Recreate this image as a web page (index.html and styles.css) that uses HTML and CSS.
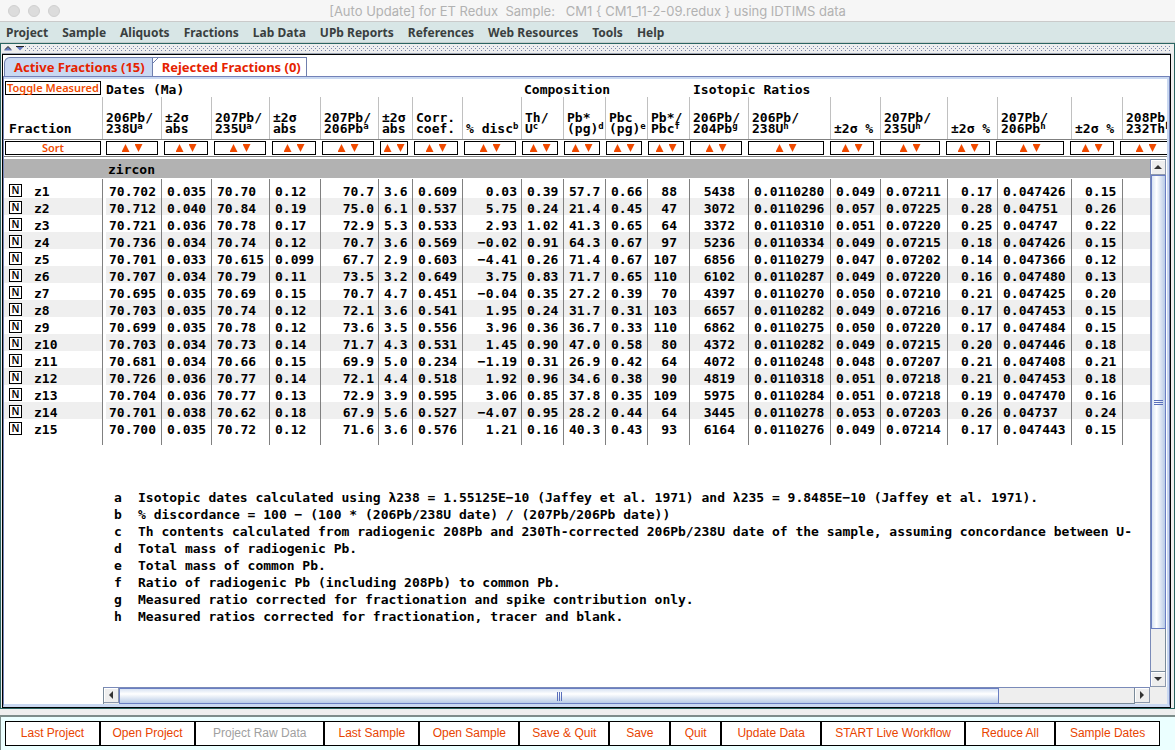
FILE: index.html
```
<!DOCTYPE html>
<html lang="en">
<head>
<meta charset="utf-8">
<title>ET Redux</title>
<link rel="stylesheet" href="styles.css">
</head>
<body>
<header class="titlebar">
  <span class="lights"><i></i><i></i><i></i></span>
  <h1>[Auto Update] for ET Redux&nbsp; Sample: &nbsp; CM1 { CM1_11-2-09.redux } using IDTIMS data</h1>
</header>
<nav class="menubar">
  <button>Project</button><button>Sample</button><button>Aliquots</button><button>Fractions</button><button>Lab Data</button><button>UPb Reports</button><button>References</button><button>Web Resources</button><button>Tools</button><button>Help</button>
</nav>
<main class="workspace">
  <div class="splitter">
    <svg width="20" height="5" viewBox="0 0 20 5"><path d="M0 4.500h8L4 .5z" fill="#6478be"/><path d="M1 3.500L4 .5l3 3" stroke="#222" fill="none"/><path d="M12 .5h8l-4 4z" fill="#6478be"/><path d="M12 .5h8" stroke="#222"/></svg>
    <span class="dots"></span>
  </div>
  <section class="panel">
    <div class="tabs" role="tablist">
      <button class="tab active" role="tab" aria-selected="true">Active Fractions (15)</button>
      <button class="tab" role="tab" aria-selected="false">Rejected Fractions (0)</button>
    </div>
    <div class="pane">
      <div class="head">
        <div class="groups"><span class="g-toggle"><button class="box">Toggle Measured</button></span><span class="g-dates">Dates (Ma)</span><span class="g-comp">Composition</span><span>Isotopic Ratios</span></div>
        <table class="grid labels">
          <colgroup><col class="w98"><col class="w59"><col class="w50"><col class="w58"><col class="w51"><col class="w58"><col class="w34"><col class="w50"><col class="w59"><col class="w42"><col class="w42"><col class="w42"><col class="w42"><col class="w59"><col class="w82"><col class="w50"><col class="w67"><col class="w50"><col class="w74"><col class="w51"><col class="w51"></colgroup>
          <tr><th>Fraction</th><th>206Pb/<br>238U<sup>a</sup></th><th>±2σ<br>abs</th><th>207Pb/<br>235U<sup>a</sup></th><th>±2σ<br>abs</th><th>207Pb/<br>206Pb<sup>a</sup></th><th>±2σ<br>abs</th><th>Corr.<br>coef.</th><th>% disc<sup>b</sup></th><th>Th/<br>U<sup>c</sup></th><th>Pb*<br>(pg)<sup>d</sup></th><th>Pbc<br>(pg)<sup>e</sup></th><th>Pb*/<br>Pbc<sup>f</sup></th><th>206Pb/<br>204Pb<sup>g</sup></th><th>206Pb/<br>238U<sup>h</sup></th><th>±2σ %</th><th>207Pb/<br>235U<sup>h</sup></th><th>±2σ %</th><th>207Pb/<br>206Pb<sup>h</sup></th><th>±2σ %</th><th>208Pb/<br>232Th<sup>h</sup></th></tr>
        </table>
        <div class="sorts">
          <button class="box first">Sort</button>
          <button class="box s52" aria-label="Sort 206Pb/238U"></button><button class="box s44" aria-label="Sort error"></button><button class="box s52" aria-label="Sort 207Pb/235U"></button><button class="box s44" aria-label="Sort error"></button><button class="box s52" aria-label="Sort 207Pb/206Pb"></button><button class="box s28" aria-label="Sort error"></button><button class="box s44" aria-label="Sort Corr. coef."></button><button class="box s52" aria-label="Sort % disc"></button><button class="box s36" aria-label="Sort Th/U"></button><button class="box s36" aria-label="Sort Pb*"></button><button class="box s36" aria-label="Sort Pbc"></button><button class="box s36" aria-label="Sort Pb*/Pbc"></button><button class="box s52" aria-label="Sort 206Pb/204Pb"></button><button class="box s76" aria-label="Sort 206Pb/238U"></button><button class="box s44" aria-label="Sort error"></button><button class="box s60" aria-label="Sort 207Pb/235U"></button><button class="box s44" aria-label="Sort error"></button><button class="box s68" aria-label="Sort 207Pb/206Pb"></button><button class="box s44" aria-label="Sort error"></button><button class="box s52" aria-label="Sort 208Pb/232Th"></button>
        </div>
      </div>
      <div class="scroll">
        <div class="view">
          <h2 class="mineral">zircon</h2>
          <table class="grid data">
            <colgroup><col class="w98"><col class="w59"><col class="w50"><col class="w58"><col class="w51"><col class="w58"><col class="w34"><col class="w50"><col class="w59"><col class="w42"><col class="w42"><col class="w42"><col class="w42"><col class="w59"><col class="w82"><col class="w50"><col class="w67"><col class="w50"><col class="w74"><col class="w51"><col class="w51"></colgroup>
            <tr><th><button>N</button>z1<td>70.702<td>0.035<td>70.70<td>0.12<td>70.7<td>3.6<td>0.609<td>0.03<td>0.39<td>57.7<td>0.66<td>88<td>5438<td>0.0110280<td>0.049<td>0.07211<td>0.17<td>0.047426<td>0.15<td></tr>
            <tr><th><button>N</button>z2<td>70.712<td>0.040<td>70.84<td>0.19<td>75.0<td>6.1<td>0.537<td>5.75<td>0.24<td>21.4<td>0.45<td>47<td>3072<td>0.0110296<td>0.057<td>0.07225<td>0.28<td>0.04751<td>0.26<td></tr>
            <tr><th><button>N</button>z3<td>70.721<td>0.036<td>70.78<td>0.17<td>72.9<td>5.3<td>0.533<td>2.93<td>1.02<td>41.3<td>0.65<td>64<td>3372<td>0.0110310<td>0.051<td>0.07220<td>0.25<td>0.04747<td>0.22<td></tr>
            <tr><th><button>N</button>z4<td>70.736<td>0.034<td>70.74<td>0.12<td>70.7<td>3.6<td>0.569<td>−0.02<td>0.91<td>64.3<td>0.67<td>97<td>5236<td>0.0110334<td>0.049<td>0.07215<td>0.18<td>0.047426<td>0.15<td></tr>
            <tr><th><button>N</button>z5<td>70.701<td>0.033<td>70.615<td>0.099<td>67.7<td>2.9<td>0.603<td>−4.41<td>0.26<td>71.4<td>0.67<td>107<td>6856<td>0.0110279<td>0.047<td>0.07202<td>0.14<td>0.047366<td>0.12<td></tr>
            <tr><th><button>N</button>z6<td>70.707<td>0.034<td>70.79<td>0.11<td>73.5<td>3.2<td>0.649<td>3.75<td>0.83<td>71.7<td>0.65<td>110<td>6102<td>0.0110287<td>0.049<td>0.07220<td>0.16<td>0.047480<td>0.13<td></tr>
            <tr><th><button>N</button>z7<td>70.695<td>0.035<td>70.69<td>0.15<td>70.7<td>4.7<td>0.451<td>−0.04<td>0.35<td>27.2<td>0.39<td>70<td>4397<td>0.0110270<td>0.050<td>0.07210<td>0.21<td>0.047425<td>0.20<td></tr>
            <tr><th><button>N</button>z8<td>70.703<td>0.035<td>70.74<td>0.12<td>72.1<td>3.6<td>0.541<td>1.95<td>0.24<td>31.7<td>0.31<td>103<td>6657<td>0.0110282<td>0.049<td>0.07216<td>0.17<td>0.047453<td>0.15<td></tr>
            <tr><th><button>N</button>z9<td>70.699<td>0.035<td>70.78<td>0.12<td>73.6<td>3.5<td>0.556<td>3.96<td>0.36<td>36.7<td>0.33<td>110<td>6862<td>0.0110275<td>0.050<td>0.07220<td>0.17<td>0.047484<td>0.15<td></tr>
            <tr><th><button>N</button>z10<td>70.703<td>0.034<td>70.73<td>0.14<td>71.7<td>4.3<td>0.531<td>1.45<td>0.90<td>47.0<td>0.58<td>80<td>4372<td>0.0110282<td>0.049<td>0.07215<td>0.20<td>0.047446<td>0.18<td></tr>
            <tr><th><button>N</button>z11<td>70.681<td>0.034<td>70.66<td>0.15<td>69.9<td>5.0<td>0.234<td>−1.19<td>0.31<td>26.9<td>0.42<td>64<td>4072<td>0.0110248<td>0.048<td>0.07207<td>0.21<td>0.047408<td>0.21<td></tr>
            <tr><th><button>N</button>z12<td>70.726<td>0.036<td>70.77<td>0.14<td>72.1<td>4.4<td>0.518<td>1.92<td>0.96<td>34.6<td>0.38<td>90<td>4819<td>0.0110318<td>0.051<td>0.07218<td>0.21<td>0.047453<td>0.18<td></tr>
            <tr><th><button>N</button>z13<td>70.704<td>0.036<td>70.77<td>0.13<td>72.9<td>3.9<td>0.595<td>3.06<td>0.85<td>37.8<td>0.35<td>109<td>5975<td>0.0110284<td>0.051<td>0.07218<td>0.19<td>0.047470<td>0.16<td></tr>
            <tr><th><button>N</button>z14<td>70.701<td>0.038<td>70.62<td>0.18<td>67.9<td>5.6<td>0.527<td>−4.07<td>0.95<td>28.2<td>0.44<td>64<td>3445<td>0.0110278<td>0.053<td>0.07203<td>0.26<td>0.04737<td>0.24<td></tr>
            <tr><th><button>N</button>z15<td>70.700<td>0.035<td>70.72<td>0.12<td>71.6<td>3.6<td>0.576<td>1.21<td>0.16<td>40.3<td>0.43<td>93<td>6164<td>0.0110276<td>0.049<td>0.07214<td>0.17<td>0.047443<td>0.15<td></tr>
          </table>
          <dl class="notes">
            <dt>a</dt><dd>Isotopic dates calculated using λ238 = 1.55125E−10 (Jaffey et al. 1971) and λ235 = 9.8485E−10 (Jaffey et al. 1971).</dd>
            <dt>b</dt><dd>% discordance = 100 − (100 * (206Pb/238U date) / (207Pb/206Pb date))</dd>
            <dt>c</dt><dd>Th contents calculated from radiogenic 208Pb and 230Th-corrected 206Pb/238U date of the sample, assuming concordance between U-</dd>
            <dt>d</dt><dd>Total mass of radiogenic Pb.</dd>
            <dt>e</dt><dd>Total mass of common Pb.</dd>
            <dt>f</dt><dd>Ratio of radiogenic Pb (including 208Pb) to common Pb.</dd>
            <dt>g</dt><dd>Measured ratio corrected for fractionation and spike contribution only.</dd>
            <dt>h</dt><dd>Measured ratios corrected for fractionation, tracer and blank.</dd>
          </dl>
        </div>
        <div class="bar vbar">
          <button class="step" aria-label="Scroll up"><svg width="8" height="4" viewBox="0 0 8 4"><path d="M0 4h8L4 0z"/></svg></button>
          <div class="thumb"><i></i><i></i><i></i></div><div class="track"></div>
          <button class="step" aria-label="Scroll down"><svg width="8" height="4" viewBox="0 0 8 4"><path d="M0 0h8L4 4z"/></svg></button>
        </div>
        <div class="bar hbar">
          <button class="step" aria-label="Scroll left"><svg width="4" height="8" viewBox="0 0 4 8"><path d="M4 0v8L0 4z"/></svg></button>
          <div class="thumb"><i></i><i></i><i></i></div><div class="track"></div>
          <button class="step" aria-label="Scroll right"><svg width="4" height="8" viewBox="0 0 4 8"><path d="M0 0v8l4-4z"/></svg></button>
        </div>
        <div class="corner"></div>
      </div>
    </div>
  </section>
</main>
<footer class="actions">
  <button class="f95">Last Project</button><button class="f95">Open Project</button><button class="f130" disabled>Project Raw Data</button><button class="f95">Last Sample</button><button class="f100">Open Sample</button><button class="f90">Save &amp; Quit</button><button class="f60">Save</button><button class="f50">Quit</button><button class="f100">Update Data</button><button class="f145">START Live Workflow</button><button class="f90">Reduce All</button><button class="f105">Sample Dates</button>
</footer>
</body>
</html>
```
FILE: styles.css
```
* { box-sizing: border-box; }
html, body { height: 100%; }
body {
  margin: 0;
  display: flex;
  flex-direction: column;
  overflow: hidden;
  background: #eee;
  color: #000;
  font: bold 13px/17px "DejaVu Sans Mono", monospace;
}
button { margin: 0; padding: 0; border: 0; background: none; font: inherit; color: inherit; white-space: nowrap; }

.titlebar {
  display: grid;
  grid-template-columns: 66px 1fr 66px;
  align-items: center;
  height: 22px;
  background: #f6f6f6;
  border-bottom: 1px solid #cacaca;
}
.lights { display: flex; gap: 8px; padding-left: 8px; }
.lights i { width: 12px; height: 12px; border-radius: 50%; background: #dcdcdc; border: 1px solid #d0d0d0; }
.titlebar h1 { margin: 0; text-align: center; font: 13px/20px Inter, sans-serif; color: #b2b2b2; white-space: nowrap; }

.menubar {
  display: flex;
  gap: 14px;
  height: 21px;
  padding-left: 6px;
  background: #d8e6e6;
  border-bottom: 1px solid #c4cccc;
  font: bold 12px/19px "Noto Sans", sans-serif;
  color: #3a3f3f;
}

.workspace {
  flex: 1;
  min-height: 0;
  display: flex;
  flex-direction: column;
  border: 1px solid #2a6562;
  padding: 0 3px 0 1px;
}
.splitter { display: flex; align-items: flex-start; gap: 1px; height: 10px; padding: 2px 0 0 2px; border-bottom: 1px solid #9aa4b4; }
.splitter svg { flex: none; }
.dots {
  flex: 1;
  height: 6px;
  background:
    conic-gradient(from 270deg at 1px 1px, #7a88ac 90deg, transparent 0) 0 0 / 4px 4px,
    conic-gradient(from 270deg at 1px 1px, #7a88ac 90deg, transparent 0) 2px 2px / 4px 4px;
}

.panel { flex: 1; min-height: 0; display: flex; flex-direction: column; border: 1px solid #000; background: #fff; padding-top: 2px; }
.tabs { display: flex; height: 19px; padding-left: 1px; }
.tab {
  padding: 0 5px 0 9px;
  border: 1px solid #6f7fae;
  border-bottom: 0;
  background: linear-gradient(135deg, #fff 3px, #6f7fae 3px, #6f7fae 4px, #fff 4px);
  border-left: 0;
  font: bold 13px/16px "Noto Sans", sans-serif;
  color: #e62200;
}
.tab.active { padding-right: 7px; border-left: 1px solid #6f7fae; background: #c9d8f1; border-top-left-radius: 6px; }

.pane { flex: 1; min-height: 0; display: flex; flex-direction: column; border: 1px solid #7282b8; border-bottom: 3px solid #c9d8f1; padding-right: 2px; background: #fff; box-shadow: inset 0 2px #c9d8f1, inset -2px 0 #c9d8f1; padding-top: 2px; }
.head { overflow: hidden; }
.groups { display: flex; height: 18px; padding-left: 1px; line-height: 21px; white-space: nowrap; }
.g-toggle { width: 101px; }
.g-toggle .box { display: block; width: 96px; margin-top: 2px; }
.g-dates { width: 418px; }
.g-comp { width: 169px; }
.box { flex: none; height: 14px; border: 1px solid #000; background: #fff; font: 600 11px/12px "Noto Sans", sans-serif; color: #f04a00; }

.grid { width: 1169px; table-layout: fixed; border-collapse: separate; border-spacing: 0; }
.grid th, .grid td { padding: 0 0 0 6px; text-align: left; white-space: nowrap; }
.w98 { width: 98px; } .w59 { width: 59px; } .w50 { width: 50px; } .w58 { width: 58px; } .w51 { width: 51px; }
.w34 { width: 34px; } .w42 { width: 42px; } .w82 { width: 82px; } .w67 { width: 67px; } .w74 { width: 74px; }

.labels { height: 42px; line-height: 11px; }
.labels th { padding: 0 0 5px 3px; border-left: 1px solid #c0c0c0; vertical-align: bottom; }
.labels th:first-child { padding-left: 4px; border-left-color: #fff; }
.labels sup { font-size: 9px; line-height: 1px; vertical-align: 4px; }

.sorts { display: flex; gap: 6px; height: 18px; padding: 1px; border: solid #808080; border-width: 1px 0; }
.sorts .first { width: 96px; margin-right: -1px; }
.sorts .box:not(.first) { display: flex; align-items: center; justify-content: center; gap: 5px; }
.sorts .box:not(.first)::before, .sorts .box:not(.first)::after { content: ""; width: 8px; height: 8px; background: #f04a00; clip-path: polygon(0 100%, 50% 0, 100% 100%); }
.sorts .box:not(.first)::after { clip-path: polygon(0 0, 50% 100%, 100% 0); }
.s28 { width: 28px; } .s36 { width: 36px; } .s44 { width: 44px; } .s52 { width: 52px; }
.s60 { width: 60px; } .s68 { width: 68px; } .s76 { width: 76px; }

.scroll { flex: 1; min-height: 0; display: grid; grid-template-columns: minmax(0, 1fr) 17px; grid-template-rows: minmax(0, 1fr) 17px; padding-top: 2px; }
.view { overflow: hidden; }
.mineral { margin: 0; height: 19px; padding-left: 104px; background: #b2b2b2; font: inherit; line-height: 21px; }
.data { margin-top: 1px; }
.data th, .data td { height: 17px; padding-top: 4px; line-height: 13px; }
.data td { border-left: 1px solid #808080; padding-left: 5px; }
.data th { position: relative; padding-left: 30px; }
.data th button { position: absolute; left: 5px; top: 3px; width: 13px; height: 13px; border: 1px solid #000; background: #fff; font: 600 10px/11px "Noto Sans", sans-serif; }
.data tr:nth-child(even) { background: #efefef; }
.data td:nth-child(2) { box-shadow: inset 3px 0 #fff; padding-left: 6px; }
.data td:nth-child(6), .data td:nth-child(9), .data td:nth-child(13), .data td:nth-child(14) { text-align: right; padding-right: 4px; }
.data td:nth-child(13) { padding-right: 12px; }
.data td:nth-child(14) { padding-right: 13px; }
.data td:nth-child(18), .data td:nth-child(20) { padding-left: 13px; }
.data tr:first-child > * { padding-top: 6px; }
.data tr:first-child button { top: 5px; }
.data tr:last-child > * { padding-bottom: 9px; }

.notes { display: grid; grid-template-columns: 24px 1fr; margin: 44px 0 0; padding-left: 110px; white-space: nowrap; }
.notes dd { margin: 0; }

.bar { display: flex; background: #eee; }
.vbar { flex-direction: column; border-left: 1px solid #7a8ab8; border-top: 1px solid #7a8a99; margin-right: 1px; }
.hbar { margin-left: 99px; border-left: 1px solid #7a8a99; border-top: 1px solid #7a8ab8; }
.step { flex: none; display: flex; align-items: center; justify-content: center; width: 15px; height: 15px; border: 1px solid #8c98ac; border-width: 0 1px 1px 0; background: #eee; fill: #333; box-shadow: inset 1px 1px #fff; }
.thumb { display: flex; align-items: center; justify-content: center; gap: 1px; border: 1px solid #6a7ec2; }
.vbar .thumb { flex: 455; flex-direction: column; background: linear-gradient(90deg, #d8e3f3, #fff 35%, #b8cbe6); }
.hbar .thumb { flex: 881; height: 16px; background: linear-gradient(#d8e3f3, #fff 35%, #b8cbe6); }
.thumb i { background: #5a70bc; }
.vbar .thumb i { width: 9px; height: 1px; }
.hbar .thumb i { width: 1px; height: 9px; }
.vbar .track { flex: 42; border: solid #7a8a99; border-width: 0 1px 1px 0; }
.hbar .track { flex: 135; height: 16px; border: solid #7a8a99; border-width: 0 1px 1px 0; }
.corner { background: #eee; }

.actions { display: flex; height: 35px; margin-top: 6px; padding: 4px 15px 4px 4px; border: solid #7d8c8a; border-width: 2px 0 0 1px; background: #ebffff; font: 12px/23px "Liberation Sans", Arial, sans-serif; color: #e84400; }
.actions button { height: 25px; border: 1px solid #000; background: #fff; min-width: 0; }
.actions button:disabled { color: #a0a0a0; }
.f50 { flex: 50; } .f60 { flex: 60; } .f90 { flex: 90; } .f95 { flex: 95; } .f100 { flex: 100; }
.f105 { flex: 105; } .f130 { flex: 130; } .f145 { flex: 145; }
```
